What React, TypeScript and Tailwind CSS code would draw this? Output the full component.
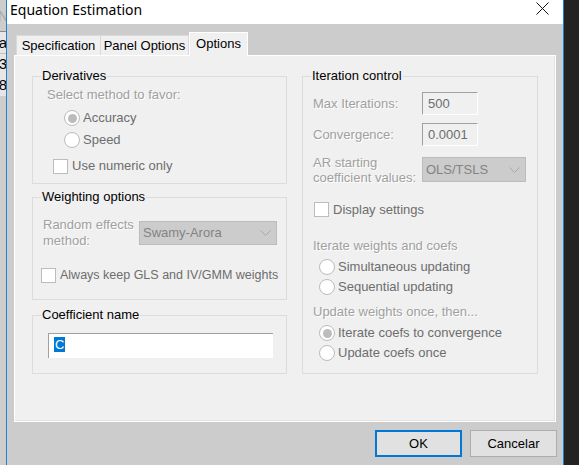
import React from "react";

const dis = "text-[#a0a0a0] [text-shadow:1px_1px_0_#ffffff] whitespace-nowrap";
const lab = "text-[#6d6d6d] whitespace-nowrap";

function Radio({ checked }: { checked?: boolean }) {
  return (
    <span className="w-[16px] h-[16px] rounded-full border border-[#bcbcbc] bg-white flex items-center justify-center shrink-0">
      {checked && <span className="w-[9px] h-[9px] rounded-full bg-[#bcbcbc]" />}
    </span>
  );
}

function Check() {
  return <span className="w-[15px] h-[15px] border border-[#bcbcbc] bg-white shrink-0" />;
}

function Chevron() {
  return (
    <svg width="11" height="6" viewBox="0 0 11 6" className="shrink-0">
      <path d="M0.5 0.5 L5.5 5.5 L10.5 0.5" fill="none" stroke="#a8a8a8" strokeWidth="1" />
    </svg>
  );
}

function Group({ label, className, children }: { label: string; className: string; children?: React.ReactNode }) {
  return (
    <div className={"relative border border-[#dcdcdc] flex flex-col " + className}>
      <span className="absolute left-[8px] -top-[9px] px-[1px] bg-[#f0f0f0] leading-[16px] text-black whitespace-nowrap">{label}</span>
      {children}
    </div>
  );
}

export default function App() {
  return (
    <div className="w-[579px] h-[465px] flex overflow-hidden font-['Liberation_Sans',Arial,sans-serif] text-[13px]">
      {/* background app strip */}
      <div className="w-[6px] flex flex-col bg-[#cdcdcd] overflow-hidden">
        <div className="h-[32px] flex items-center justify-end text-[#a8a8a8] text-[14px] leading-[16px] border-b border-[#8a8a8a]">
          <span className="-mr-[2px]">N</span>
        </div>
        <div className="h-[22px] flex items-center justify-end text-black text-[15px] leading-[18px] bg-[#e6e6e6] border-b border-[#c0c0c0]">
          <span className="-mr-[1px]">a</span>
        </div>
        <div className="h-[20px] flex items-center justify-end text-black text-[15px] leading-[18px] bg-[#e6e6e6]">
          <span className="-mr-[1px]">3</span>
        </div>
        <div className="h-[22px] flex items-center justify-end text-black text-[15px] leading-[18px] bg-[#e6e6e6]">
          <span className="-mr-[1px]">8</span>
        </div>
      </div>

      {/* dialog window */}
      <div className="w-[558px] border-x border-[#1883d7] flex flex-col bg-[#cccccc]">
        <div className="h-[24px] bg-white flex items-start justify-between">
          <span className="ml-[3px] text-[14px] leading-[20px] text-black font-['Noto_Sans',sans-serif] whitespace-nowrap">Equation Estimation</span>
          <svg width="13" height="13" viewBox="0 0 13 13" className="mt-[2px] mr-[14px]">
            <path d="M0.5 0.5 L12.5 12.5 M12.5 0.5 L0.5 12.5" stroke="#111" strokeWidth="1" />
          </svg>
        </div>

        <div className="flex flex-col">
          {/* tabs */}
          <div className="flex items-end h-[23px] mt-[8px] ml-[9px] relative z-10">
            <div className="w-[84px] h-[20px] border-t border-l border-[#d9d9d9] bg-[#f0f0f0] flex items-center justify-center text-black">Specification</div>
            <div className="w-[89px] h-[20px] border-t border-l border-r border-[#d9d9d9] bg-[#f0f0f0] flex items-center justify-center text-black">Panel Options</div>
            <div className="w-[59px] h-[24px] -mb-[1px] border-t border-l border-r border-white bg-[#f0f0f0] flex items-center justify-center text-black pb-[1px]">Options</div>
          </div>

          {/* panel */}
          <div className="ml-[7px] w-[542px] h-[367px] border border-white bg-[#f0f0f0] shadow-[inset_-1px_-1px_0_#e3e3e3] flex gap-[15px] pl-[17px] pt-[20px]">
            {/* left column */}
            <div className="w-[255px] flex flex-col">
              <Group label="Derivatives" className="h-[108px] pt-[10px]">
                <div className={"h-[16px] leading-[16px] pl-[14px] " + dis}>Select method to favor:</div>
                <div className="mt-[5px] h-[20px] pl-[31px] flex items-center gap-[3px]">
                  <Radio checked />
                  <span className={lab}>Accuracy</span>
                </div>
                <div className="mt-[2px] h-[20px] pl-[31px] flex items-center gap-[3px]">
                  <Radio />
                  <span className={lab}>Speed</span>
                </div>
                <div className="mt-[6px] h-[20px] pl-[20px] flex items-center gap-[4px]">
                  <Check />
                  <span className={lab}>Use numeric only</span>
                </div>
              </Group>

              <Group label="Weighting options" className="mt-[13px] h-[103px] pt-[19px]">
                <div className="h-[32px] pl-[10px] flex items-center">
                  <div className={"w-[96px] leading-[16px] " + dis}>
                    <div>Random effects</div>
                    <div>method:</div>
                  </div>
                  <div className="w-[138px] h-[24px] bg-[#cccccc] border border-[#bcbcbc] flex items-center justify-between pl-[3px] pr-[5px]">
                    <span className="text-[#838383]">Swamy-Arora</span>
                    <Chevron />
                  </div>
                </div>
                <div className="mt-[16px] h-[20px] pl-[8px] flex items-center gap-[4px]">
                  <Check />
                  <span className={lab + " text-[12.5px]"}>Always keep GLS and IV/GMM weights</span>
                </div>
              </Group>

              <Group label="Coefficient name" className="mt-[15px] h-[59px] pt-[17px] pl-[15px]">
                <div className="w-[225px] h-[25px] bg-white border-t border-l border-[#a0a0a0] flex items-start">
                  <span className="ml-[5px] mt-[3px] h-[15px] leading-[15px] px-[1px] bg-[#0078d7] text-white">C</span>
                </div>
              </Group>
            </div>

            {/* right column */}
            <Group label="Iteration control" className="w-[236px] h-[298px] pt-[15px]">
              <div className="h-[23px] pl-[10px] flex items-center">
                <span className={"w-[109px] " + dis}>Max Iterations:</span>
                <div className="w-[56px] h-[23px] border border-t-[#a0a0a0] border-l-[#a0a0a0] border-r-white border-b-white bg-[#f0f0f0] flex items-center pl-[5px] text-[#6d6d6d]">500</div>
              </div>
              <div className="mt-[8px] h-[23px] pl-[10px] flex items-center">
                <span className={"w-[109px] " + dis}>Convergence:</span>
                <div className="w-[56px] h-[23px] border border-t-[#a0a0a0] border-l-[#a0a0a0] border-r-white border-b-white bg-[#f0f0f0] flex items-center pl-[5px] text-[#6d6d6d]">0.0001</div>
              </div>
              <div className="mt-[8px] h-[31px] pl-[10px] flex items-center">
                <div className={"w-[109px] leading-[15px] " + dis}>
                  <div>AR starting</div>
                  <div>coefficient values:</div>
                </div>
                <div className="w-[104px] h-[25px] bg-[#cccccc] border border-[#bcbcbc] flex items-center justify-between pl-[3px] pr-[5px]">
                  <span className="text-[#838383]">OLS/TSLS</span>
                  <Chevron />
                </div>
              </div>
              <div className="mt-[15px] h-[19px] pl-[11px] flex items-center gap-[4px]">
                <Check />
                <span className={lab}>Display settings</span>
              </div>
              <div className={"mt-[19px] h-[16px] leading-[16px] pl-[10px] " + dis}>Iterate weights and coefs</div>
              <div className="mt-[3px] h-[20px] pl-[16px] flex items-center gap-[3px]">
                <Radio />
                <span className={lab}>Simultaneous updating</span>
              </div>
              <div className="h-[20px] pl-[16px] flex items-center gap-[3px]">
                <Radio />
                <span className={lab}>Sequential updating</span>
              </div>
              <div className={"mt-[7px] h-[16px] leading-[16px] pl-[10px] " + dis}>Update weights once, then...</div>
              <div className="mt-[3px] h-[20px] pl-[16px] flex items-center gap-[3px]">
                <Radio checked />
                <span className={lab}>Iterate coefs to convergence</span>
              </div>
              <div className="h-[20px] pl-[16px] flex items-center gap-[3px]">
                <Radio />
                <span className={lab}>Update coefs once</span>
              </div>
            </Group>
          </div>

          {/* buttons */}
          <div className="mt-[8px] flex justify-end gap-[8px] pr-[6px]">
            <button className="w-[87px] h-[27px] border-2 border-[#0078d7] bg-[#e1e1e1] text-black text-[13px]">OK</button>
            <button className="w-[87px] h-[27px] border border-[#adadad] bg-[#e1e1e1] text-black text-[13px]">Cancelar</button>
          </div>
        </div>
      </div>

      <div className="flex-1 bg-[#232323]" />
    </div>
  );
}
